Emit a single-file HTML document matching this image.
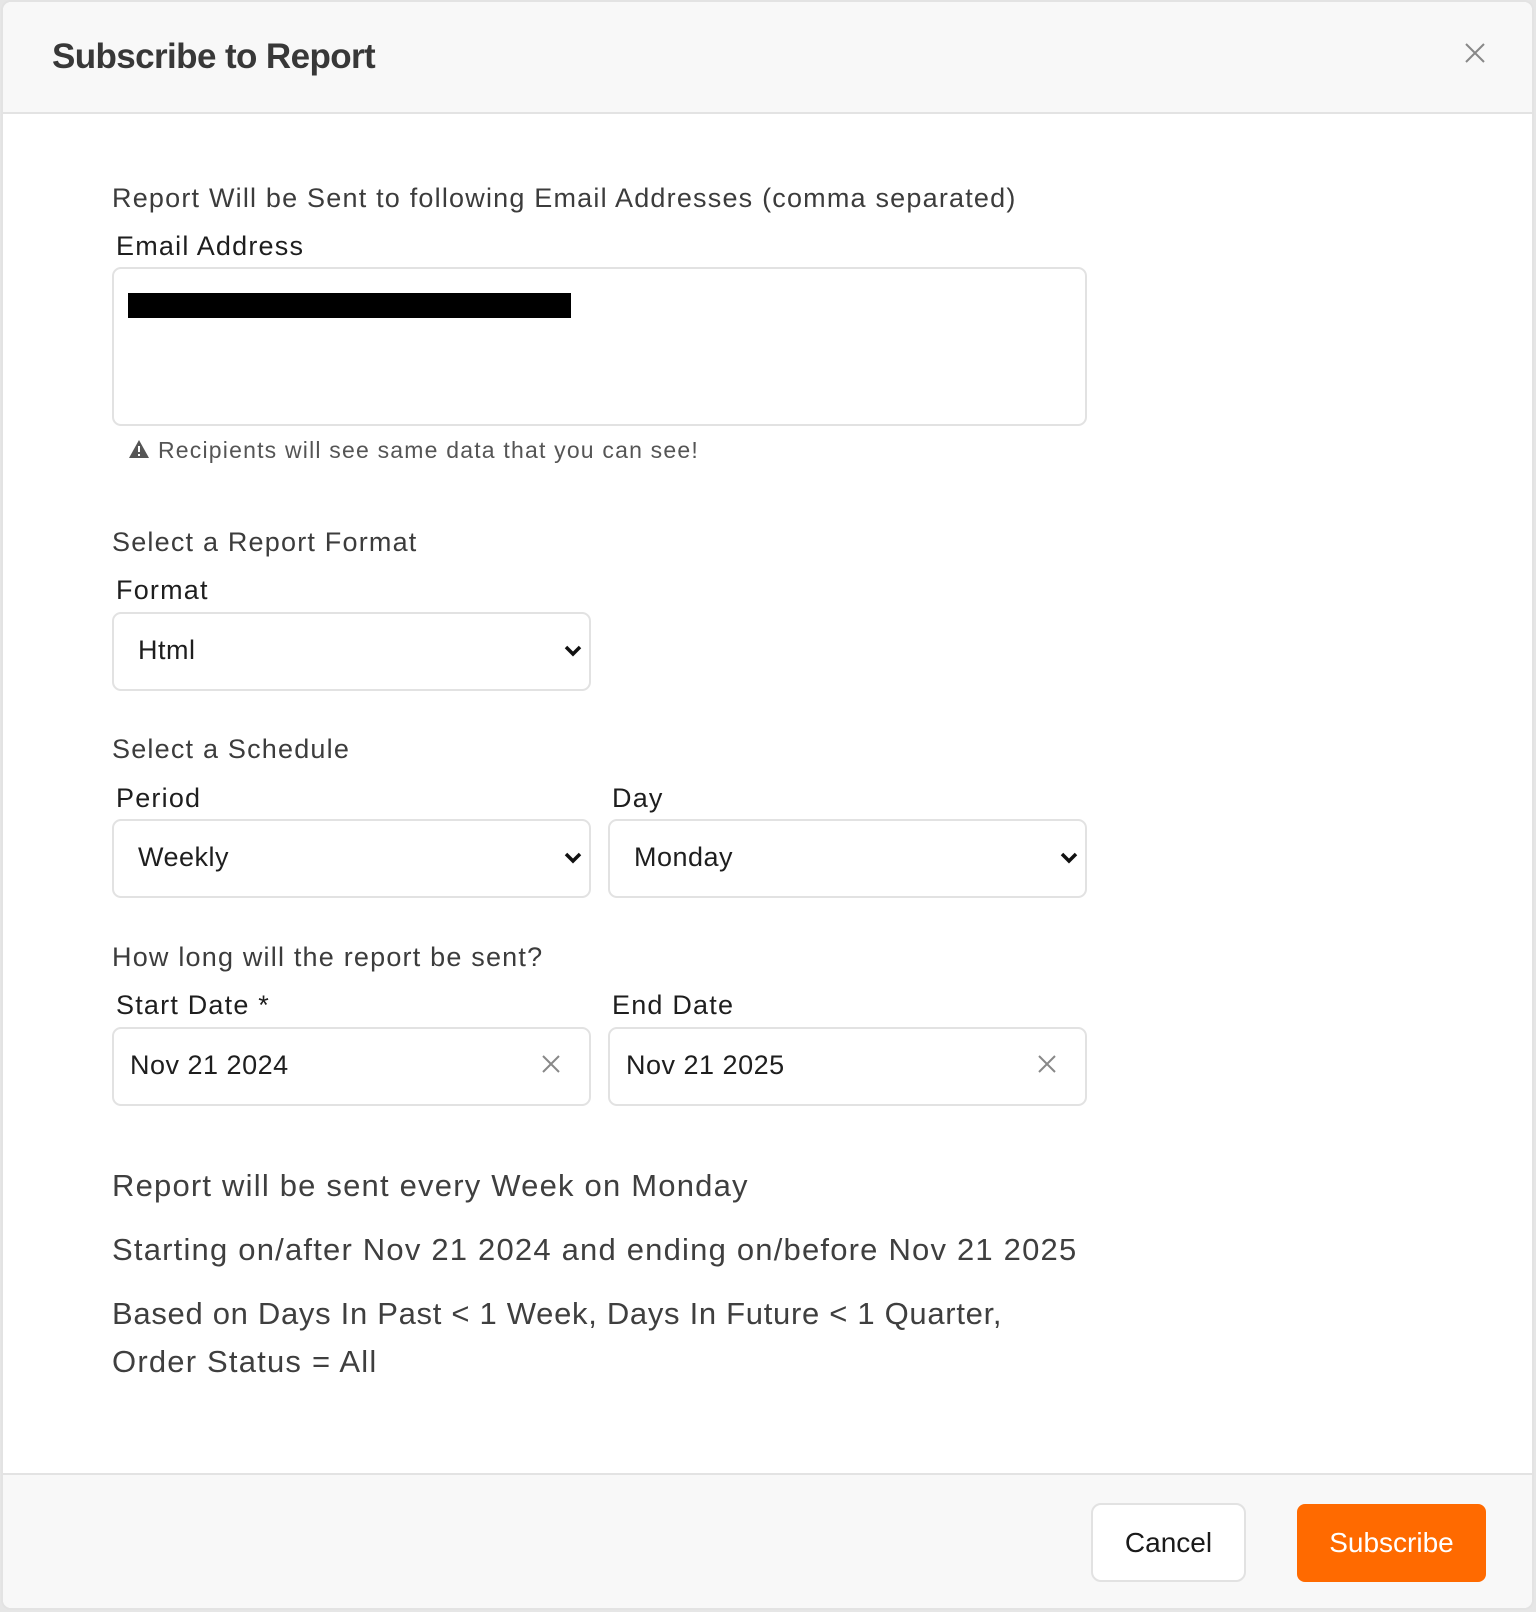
<!DOCTYPE html>
<html><head><style>
*{box-sizing:border-box;margin:0;padding:0}
body{width:1536px;height:1612px;background:#e6e6e6;font-family:"Liberation Sans",sans-serif;position:relative;overflow:hidden}
.dlg{position:absolute;left:1px;top:0px;width:1533px;height:1610px;background:#fff;border:2px solid #e3e3e3;border-radius:10px;overflow:hidden}
.hdr{position:absolute;left:0;top:0;right:0;height:112px;background:#f8f8f8;border-bottom:2px solid #e3e3e3}
.t{position:absolute;white-space:nowrap;line-height:1}
.box{position:absolute;border:2px solid #e2e2e2;border-radius:9px;background:#fff}
.ftr{position:absolute;left:0;right:0;top:1471px;bottom:0;background:#f8f8f8;border-top:2px solid #e3e3e3}
.sec{font-size:27px;color:#3c3c3c;letter-spacing:1.2px}
.lbl{font-size:27px;color:#1e1e1e;letter-spacing:1.2px}
.val{font-size:27px;color:#1e1e1e;letter-spacing:0.5px}
.sum{font-size:31px;color:#3f3f3f;letter-spacing:1.2px}
</style></head><body>
<div class="dlg">
<div class="hdr">
<div class="t" style="left:49px;top:37px;font-size:35px;font-weight:bold;color:#383838;letter-spacing:-0.6px">Subscribe to Report</div>
<svg style="position:absolute;left:1462px;top:41px" width="20" height="20" viewBox="0 0 20 20"><path d="M1 1L19 19M19 1L1 19" stroke="#888" stroke-width="2"/></svg>
</div>
<div class="t sec" style="left:109px;top:183px">Report Will be Sent to following Email Addresses (comma separated)</div>
<div class="t lbl" style="left:113px;top:231px">Email Address</div>
<div class="box" style="left:109px;top:265px;width:975px;height:159px"></div>
<div style="position:absolute;left:125px;top:291px;width:443px;height:25px;background:#000"></div>
<svg style="position:absolute;left:125px;top:437px" width="22" height="20" viewBox="0 0 22 20"><path d="M11 1L21 19H1Z" fill="#555"/><rect x="10" y="7" width="2" height="6" fill="#fff"/><rect x="10" y="15" width="2" height="2" fill="#fff"/></svg>
<div class="t" style="left:155px;top:437px;font-size:23px;color:#555;letter-spacing:1.2px">Recipients will see same data that you can see!</div>
<div class="t sec" style="left:109px;top:527px">Select a Report Format</div>
<div class="t lbl" style="left:113px;top:575px">Format</div>
<div class="box" style="left:109px;top:610px;width:479px;height:79px"></div>
<div class="t val" style="left:135px;top:635px">Html</div>
<svg style="position:absolute;left:561px;top:643px" width="18" height="12" viewBox="0 0 18 12"><path d="M2 2L9 9L16 2" stroke="#111" stroke-width="3.5" fill="none"/></svg>
<div class="t sec" style="left:109px;top:734px">Select a Schedule</div>
<div class="t lbl" style="left:113px;top:783px">Period</div>
<div class="t lbl" style="left:609px;top:783px">Day</div>
<div class="box" style="left:109px;top:817px;width:479px;height:79px"></div>
<div class="t val" style="left:135px;top:842px">Weekly</div>
<svg style="position:absolute;left:561px;top:850px" width="18" height="12" viewBox="0 0 18 12"><path d="M2 2L9 9L16 2" stroke="#111" stroke-width="3.5" fill="none"/></svg>
<div class="box" style="left:605px;top:817px;width:479px;height:79px"></div>
<div class="t val" style="left:631px;top:842px">Monday</div>
<svg style="position:absolute;left:1057px;top:850px" width="18" height="12" viewBox="0 0 18 12"><path d="M2 2L9 9L16 2" stroke="#111" stroke-width="3.5" fill="none"/></svg>
<div class="t sec" style="left:109px;top:942px">How long will the report be sent?</div>
<div class="t lbl" style="left:113px;top:990px">Start Date *</div>
<div class="t lbl" style="left:609px;top:990px">End Date</div>
<div class="box" style="left:109px;top:1025px;width:479px;height:79px"></div>
<div class="t val" style="left:127px;top:1050px">Nov 21 2024</div>
<svg style="position:absolute;left:539px;top:1053px" width="18" height="18" viewBox="0 0 18 18"><path d="M1 1L17 17M17 1L1 17" stroke="#888" stroke-width="2"/></svg>
<div class="box" style="left:605px;top:1025px;width:479px;height:79px"></div>
<div class="t val" style="left:623px;top:1050px">Nov 21 2025</div>
<svg style="position:absolute;left:1035px;top:1053px" width="18" height="18" viewBox="0 0 18 18"><path d="M1 1L17 17M17 1L1 17" stroke="#888" stroke-width="2"/></svg>
<div class="t sum" style="left:109px;top:1168px">Report will be sent every Week on Monday</div>
<div class="t sum" style="left:109px;top:1232px">Starting on/after Nov 21 2024 and ending on/before Nov 21 2025</div>
<div class="t sum" style="left:109px;top:1296px;letter-spacing:0.7px">Based on Days In Past &lt; 1 Week, Days In Future &lt; 1 Quarter,</div>
<div class="t sum" style="left:109px;top:1344px">Order Status = All</div>
<div class="ftr">
<div style="position:absolute;left:1088px;top:28px;width:155px;height:79px;background:#fff;border:2px solid #e2e2e2;border-radius:10px;font-size:28px;color:#1a1a1a;text-align:center;line-height:75px">Cancel</div>
<div style="position:absolute;left:1294px;top:29px;width:189px;height:78px;background:#ff6a00;border-radius:8px;font-size:28px;color:#fff;text-align:center;line-height:78px">Subscribe</div>
</div>
</div>
</body></html>
